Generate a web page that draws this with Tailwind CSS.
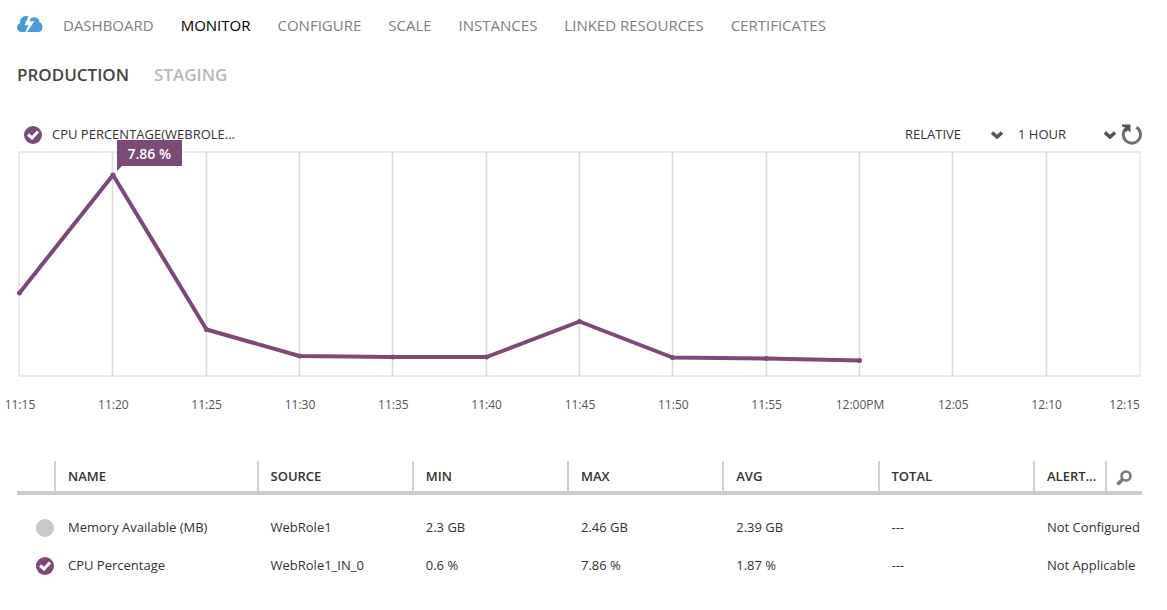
<!DOCTYPE html>
<html lang="en">
<head>
<meta charset="utf-8">
<title>Cloud Service Monitor</title>
<meta name="viewport" content="width=device-width, initial-scale=1">
<script src="https://cdn.jsdelivr.net/npm/@tailwindcss/browser@4"></script>
</head>
<body class="bg-white font-['Open_Sans','Noto_Sans',sans-serif] text-[13px] text-[#333]">
<main class="pr-[25px] pl-[17px]">
  <nav class="flex h-[50px] items-center gap-[27px] text-[15px] text-[#808080]" aria-label="Sections">
    <a href="#" aria-label="Cloud service" class="-mr-[7px] block pb-0.5">
      <svg class="block" width="26" height="18" viewBox="0 0 26 18"><path fill="#4a9bd6" d="M5 17C2 17 0 15 0 12.500C0 10.300 1.300 8.600 3 8C3 3.300 5.500 1 9.500 1C11.500 1 13.200 1.800 14.300 3C15.200 2.500 16.200 2.200 17.500 2.300C20.500 2.400 22.500 4.400 22.600 7.200C24.500 8 25.500 9.700 25.500 12C25.500 15 23.700 17 21 17Z"/><path fill="#fff" d="M11.500 1H14.800L12.500 6.500L17.500 6L10 17H8.500L11.500 9.700L7.500 10.200Z"/></svg>
    </a>
    <a href="#">DASHBOARD</a>
    <a href="#" class="text-black" aria-current="page">MONITOR</a>
    <a href="#">CONFIGURE</a>
    <a href="#">SCALE</a>
    <a href="#">INSTANCES</a>
    <a href="#">LINKED RESOURCES</a>
    <a href="#">CERTIFICATES</a>
  </nav>

  <div class="flex h-[50px] items-center gap-[25px] text-[17px] font-semibold">
    <a href="#" class="text-[#444]">PRODUCTION</a>
    <a href="#" class="text-[#b8b8b8]">STAGING</a>
  </div>

  <section aria-label="Metrics chart">
    <div class="mt-[18px] flex h-[33px] items-center justify-between pl-[7px]">
      <label class="flex items-center gap-[10px]">
        <span class="relative block size-[18px]">
          <input type="checkbox" checked class="peer block size-[18px] appearance-none rounded-full bg-[#c8c8c8] checked:bg-[#7c4a77]">
          <svg class="pointer-events-none absolute inset-0 hidden peer-checked:block" width="18" height="18" viewBox="0 0 18 18" fill="none" stroke="#fff" stroke-width="3"><path d="M4 8.500L8 12L14 5.500"/></svg>
        </span>
        <span>CPU PERCENTAGE(WEBROLE...</span>
      </label>
      <div class="flex items-center">
        <div class="relative w-[98px]">
          <select aria-label="Scale mode" class="block w-full appearance-none"><option>RELATIVE</option><option>ABSOLUTE</option></select>
          <svg class="pointer-events-none absolute top-1/2 right-0 -translate-y-1/2" width="12" height="8" viewBox="0 0 12 8" fill="none" stroke="#555" stroke-width="3.500"><path d="M1 1.500L6 6L11 1.500"/></svg>
        </div>
        <div class="relative ml-[15px] w-[98px]">
          <select aria-label="Time range" class="block w-full appearance-none"><option>1 HOUR</option><option>24 HOURS</option><option>7 DAYS</option></select>
          <svg class="pointer-events-none absolute top-1/2 right-0 -translate-y-1/2" width="12" height="8" viewBox="0 0 12 8" fill="none" stroke="#555" stroke-width="3.500"><path d="M1 1.500L6 6L11 1.500"/></svg>
        </div>
        <button type="button" aria-label="Refresh" class="ml-[5px] block">
          <svg class="block" width="21" height="21" viewBox="0 0 21 21"><path fill="none" stroke="#707070" stroke-width="3" d="M15.500 3.300A8.600 8.600 0 1 1 4.300 5"/><path fill="#555" d="M1 0.500H9.500V8.500L7 6.300L5 8L2.800 5.800L4.200 3.500L1 2.500Z"/></svg>
        </button>
      </div>
    </div>

    <div class="relative mr-px ml-px h-[226px]">
      <svg class="block h-full w-full overflow-visible" viewBox="0 0 1123 226" preserveAspectRatio="none" fill="none" role="img" aria-label="CPU percentage over time">
        <path stroke="#ebebeb" stroke-width="2" vector-effect="non-scaling-stroke" d="M1 1H1122V225H1Z"/>
        <path stroke="#dcdcdc" stroke-width="1.500" vector-effect="non-scaling-stroke" d="M94.500 1V225M188.500 1V225M281.500 1V225M374.500 1V225M468.500 1V225M561.500 1V225M654.500 1V225M748.500 1V225M841.500 1V225M934.500 1V225M1028.500 1V225"/>
        <polyline stroke="#7c4a77" stroke-width="4" stroke-linejoin="round" stroke-linecap="round" vector-effect="non-scaling-stroke" points="1.500,142 95,24 188.500,178.500 281.500,205 375,206 468.500,206 561.500,170.500 654.500,206.500 748.500,207.500 841.500,209.500"/>
        <path stroke="#7c4a77" stroke-width="5" stroke-linecap="round" vector-effect="non-scaling-stroke" d="M1.500 142h0M95 24h0M188.500 178.500h0M281.500 205h0M375 206h0M468.500 206h0M561.500 170.500h0M654.500 206.500h0M748.500 207.500h0M841.500 209.500h0"/>
      </svg>
      <div class="absolute -top-[11px] left-[8.800%]">
        <div class="flex h-[26px] w-[65px] items-center justify-center bg-[#7c4a77] text-[14px] font-semibold text-white">7.86 %</div>
        <svg class="block" width="5" height="5" viewBox="0 0 5 5"><path fill="#7c4a77" d="M0 0H5L0 5Z"/></svg>
      </div>
    </div>

    <div class="mt-[18px] mr-[2px] ml-[3px] flex h-5 items-center justify-between text-[12px] text-[#555] *:flex *:w-0 *:justify-center *:whitespace-nowrap">
      <span>11:15</span><span>11:20</span><span>11:25</span><span>11:30</span><span>11:35</span><span>11:40</span><span>11:45</span><span>11:50</span><span>11:55</span><span>12:00PM</span><span>12:05</span><span>12:10</span><span class="justify-end!">12:15</span>
    </div>
  </section>

  <table class="mt-[46px] w-full table-fixed border-collapse text-left">
    <colgroup><col class="w-[37px]"><col class="w-[18%]"><col class="w-[13.800%]"><col class="w-[13.800%]"><col class="w-[13.800%]"><col class="w-[13.800%]"><col><col class="w-[72px]"><col class="w-[37px]"></colgroup>
    <thead>
      <tr class="h-8 *:border-b-4 *:border-b-[#ccc] *:p-0 *:font-semibold">
        <th aria-label="Plotted"></th>
        <th><div class="flex h-[30px] items-center border-l-2 border-[#d0d0d0] pt-0.5 pl-3">NAME</div></th>
        <th><div class="flex h-[30px] items-center border-l-2 border-[#d0d0d0] pt-0.5 pl-3">SOURCE</div></th>
        <th><div class="flex h-[30px] items-center border-l-2 border-[#d0d0d0] pt-0.5 pl-3">MIN</div></th>
        <th><div class="flex h-[30px] items-center border-l-2 border-[#d0d0d0] pt-0.5 pl-3">MAX</div></th>
        <th><div class="flex h-[30px] items-center border-l-2 border-[#d0d0d0] pt-0.5 pl-3">AVG</div></th>
        <th><div class="flex h-[30px] items-center border-l-2 border-[#d0d0d0] pt-0.5 pl-3">TOTAL</div></th>
        <th><div class="flex h-[30px] items-center border-l-2 border-[#d0d0d0] pt-0.5 pl-3">ALERT...</div></th>
        <th><div class="flex h-[30px] items-center border-l-2 border-[#d0d0d0] pt-1 pl-[9px]">
          <button type="button" aria-label="Search metrics" class="block"><svg class="block" width="16" height="16" viewBox="0 0 16 16" fill="none" stroke="#777b80"><circle cx="10" cy="6" r="4.500" stroke-width="2.600"/><path stroke-width="3.600" d="M6.500 9.500L1.500 14.500"/></svg></button>
        </div></th>
      </tr>
    </thead>
    <tbody class="*:*:p-0 *:*:pl-[14px] *:*:whitespace-nowrap">
      <tr class="h-[53px] *:pt-[14px]!">
        <td class="pl-[19px]!"><input type="checkbox" aria-label="Plot Memory Available" class="block size-[18px] appearance-none rounded-full bg-[#c8c8c8]"></td>
        <td>Memory Available (MB)</td><td>WebRole1</td><td>2.3 GB</td><td>2.46 GB</td><td>2.39 GB</td><td>---</td><td colspan="2">Not Configured</td>
      </tr>
      <tr class="h-10">
        <td class="pl-[19px]!"><span class="relative block size-[18px]">
          <input type="checkbox" checked aria-label="Plot CPU Percentage" class="peer block size-[18px] appearance-none rounded-full bg-[#c8c8c8] checked:bg-[#7c4a77]">
          <svg class="pointer-events-none absolute inset-0 hidden peer-checked:block" width="18" height="18" viewBox="0 0 18 18" fill="none" stroke="#fff" stroke-width="3"><path d="M4 8.500L8 12L14 5.500"/></svg>
        </span></td>
        <td>CPU Percentage</td><td>WebRole1_IN_0</td><td>0.6 %</td><td>7.86 %</td><td>1.87 %</td><td>---</td><td colspan="2">Not Applicable</td>
      </tr>
    </tbody>
  </table>
</main>
</body>
</html>
